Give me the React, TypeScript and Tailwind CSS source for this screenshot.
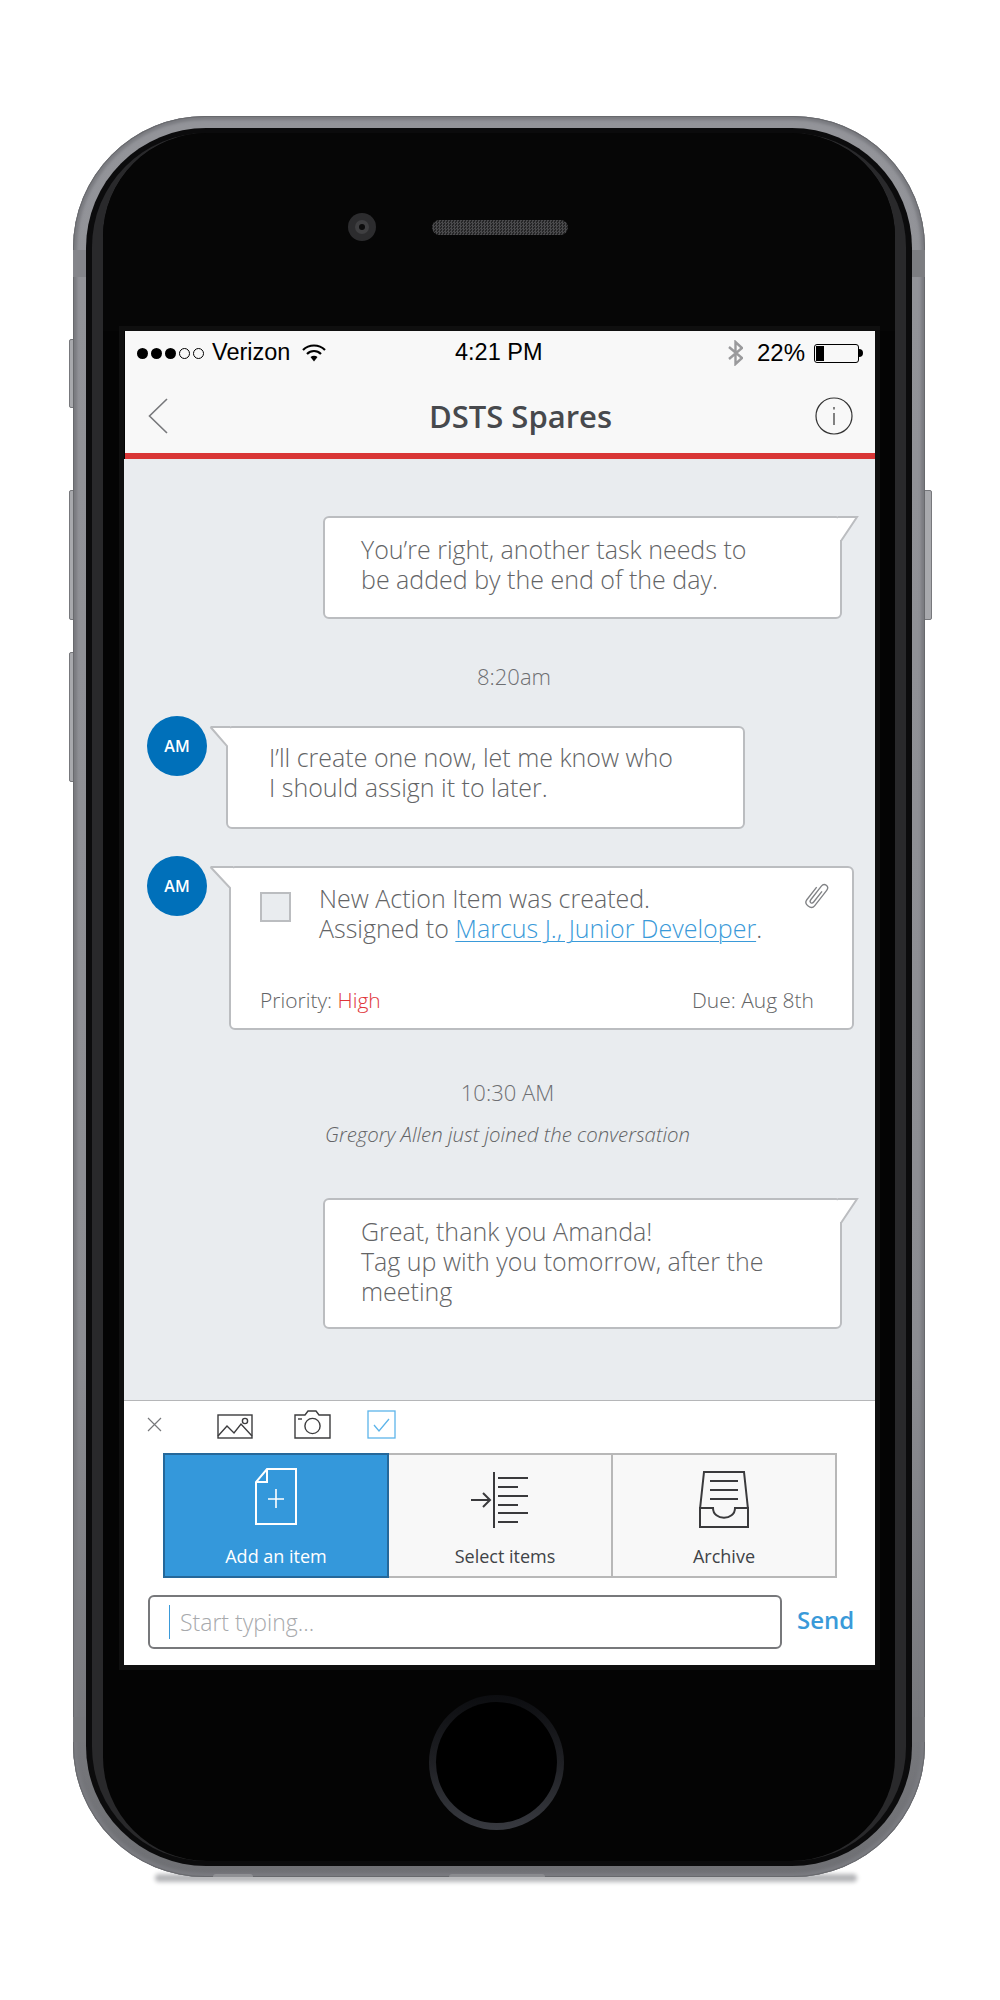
import React from 'react';

const body = "font-['Open_Sans',sans-serif]";

function LeftTail({ wide }: { wide?: boolean }) {
  if (wide) {
    return (
      <svg className="absolute left-[-22px] top-[-2px]" width="24" height="26" viewBox="0 0 24 26">
        <path d="M1.5 1 H24 V24 H21 Z" fill="#fff" />
        <path d="M1.5 1 H24 M1.5 1 L21 22 V26" fill="none" stroke="#bbbdc0" strokeWidth="2" />
      </svg>
    );
  }
  return (
    <svg className="absolute left-[-19px] top-[-2px]" width="21" height="24" viewBox="0 0 21 24">
      <path d="M1.5 1 H21 V22 H18 Z" fill="#fff" />
      <path d="M1.5 1 H21 M1.5 1 L18 20 V24" fill="none" stroke="#bbbdc0" strokeWidth="2" />
    </svg>
  );
}

function RightTail() {
  return (
    <svg className="absolute right-[-19px] top-[-2px]" width="21" height="28" viewBox="0 0 21 28">
      <path d="M0 1 H19 L3 24 H0 Z" fill="#fff" />
      <path d="M0 1 H19 L3 25 V28" fill="none" stroke="#bbbdc0" strokeWidth="2" />
    </svg>
  );
}

function Avatar() {
  return (
    <div className="flex h-[60px] w-[60px] shrink-0 items-center justify-center rounded-full bg-[#0070ba] text-[16px] font-semibold text-white">
      AM
    </div>
  );
}

function ClipIcon() {
  return (
    <svg className="absolute right-[21px] top-[12px]" width="30" height="32" viewBox="1 1 24 26" fill="none" stroke="#808285" strokeWidth="1.1">
      <g transform="rotate(38 13 14)">
        <path d="M9 8 V21 C9 25.5 17 25.5 17 21 V5 C17 1 11.5 1 11.5 5 V19 C11.5 21.5 14.5 21.5 14.5 19 V8" />
      </g>
    </svg>
  );
}

function ImageIcon() {
  return (
    <svg width="36" height="25" viewBox="0 0 36 25" fill="none" stroke="#3c3c3e" strokeWidth="1.4">
      <rect x="1" y="1" width="34" height="23" />
      <path d="M1 22 L10 12 L17 19 L24 10 L35 22" />
      <circle cx="28" cy="7" r="2.6" />
    </svg>
  );
}

function CameraIcon() {
  return (
    <svg width="37" height="29" viewBox="0 0 37 29" fill="none" stroke="#3c3c3e" strokeWidth="1.4">
      <path d="M1 5 H11 L14 1 H22 L25 5 H36 V28 H1 Z" />
      <circle cx="18.5" cy="16" r="7.6" />
      <path d="M4 9 H8" />
    </svg>
  );
}

function CheckIcon() {
  return (
    <svg width="29" height="29" viewBox="0 0 29 29" fill="none" stroke="#5cb4ea" strokeWidth="1.3">
      <rect x="1" y="1" width="27" height="27" />
      <path d="M7 15 L12 21 L22 9" />
    </svg>
  );
}

function AddIcon() {
  return (
    <svg width="60" height="66" viewBox="0 0 60 66" fill="none" stroke="#fff" strokeWidth="2">
      <path d="M21 4 H50 V59 H10 V17 Z M21 4 V17 H10" />
      <path d="M30 24 V43 M22 34 H38" strokeWidth="1.6" />
    </svg>
  );
}

function SelectIcon() {
  return (
    <svg width="60" height="66" viewBox="0 0 60 66" fill="none" stroke="#3a3a3c" strokeWidth="2">
      <path d="M1 35 H19 M13 28 L20 35 L13 42" />
      <path d="M24 7 V63" />
      <path d="M28 13 H58 M28 22 H48 M28 31 H58 M28 40 H48 M28 48 H58 M28 57 H48" />
    </svg>
  );
}

function ArchiveIcon() {
  return (
    <svg width="60" height="66" viewBox="0 0 60 66" fill="none" stroke="#3a3a3c" strokeWidth="2">
      <path d="M6 44 L10 7 H50 L54 44" />
      <path d="M16 16 H44 M16 25 H44 M16 34 H44" />
      <path d="M6 43 H19 C19 56 41 56 41 43 H54 V62 H6 Z" />
    </svg>
  );
}

export default function App() {
  return (
    <div className={`h-[2000px] w-[1000px] bg-white pl-[73px] pt-[116px] ${body}`}>
      <div className="relative h-[1761px] w-[852px]">
        {/* side buttons */}
        <div className="absolute left-[-4px] top-[223px] h-[69px] w-[6px] rounded-l-[2px] border border-[#77787c] bg-[#a8a9ad]" />
        <div className="absolute left-[-4px] top-[374px] h-[130px] w-[6px] rounded-l-[2px] border border-[#77787c] bg-[#a8a9ad]" />
        <div className="absolute left-[-4px] top-[536px] h-[130px] w-[6px] rounded-l-[2px] border border-[#77787c] bg-[#a8a9ad]" />
        <div className="absolute right-[-7px] top-[374px] h-[130px] w-[9px] rounded-r-[2px] border border-[#77787c] bg-[#a8a9ad]" />
        {/* shadow under the phone */}
        <div className="absolute bottom-[-5px] left-[82px] h-[8px] w-[702px] rounded-full bg-[#b4b5b8] blur-[2px]" />

        <div className="relative h-full w-full rounded-[132px] bg-[linear-gradient(180deg,#939499,#8c8d92_70%,#6f7074)] px-[13px] pb-[11px] pt-[12px] shadow-[inset_0_0_0_1px_#68696d,inset_0_0_3px_4px_#7a7b80]">
          {/* antenna bands */}
          <div className="absolute left-0 top-[134px] h-[27px] w-[13px] bg-[#84858a]" />
          <div className="absolute right-0 top-[134px] h-[27px] w-[13px] bg-[#7c7d81]" />
          <div className="absolute bottom-[135px] left-0 h-[25px] w-[13px] bg-[#77787c]" />
          <div className="absolute bottom-[135px] right-0 h-[25px] w-[13px] bg-[#77787c]" />
          {/* bottom seams */}
          <div className="absolute bottom-0 left-[140px] h-[3px] w-[40px] rounded-t-full bg-[#8f9094]" />
          <div className="absolute bottom-0 left-[376px] h-[3px] w-[96px] rounded-t-[6px] bg-[#8a8b8f]" />

          <div className="h-full w-full rounded-[120px] bg-[#0b0b0c] px-[6px] py-[5px]">
            <div className="h-full w-full rounded-[114px] bg-[#29292b] px-[11px]">
              <div className="flex h-full w-full flex-col rounded-[104px] bg-[#040404]">
                {/* top bezel */}
                <div className="flex h-[198px] shrink-0 items-start rounded-t-[104px] bg-[#060606] pl-[245px] pt-[80px]">
                  <div className="flex h-[28px] w-[28px] items-center justify-center rounded-full bg-[#2c2c2e]">
                    <div className="h-[14px] w-[14px] rounded-full bg-[#3f3f41]">
                      <div className="ml-[4px] mt-[4px] h-[6px] w-[6px] rounded-full bg-[#0c0c0c]" />
                    </div>
                  </div>
                  <div className="ml-[56px] mt-[7px] h-[15px] w-[136px] rounded-full bg-[repeating-conic-gradient(#4a4a4c_0_25%,#252526_0_50%)] bg-size-[3px_3px]" />
                </div>

                {/* screen */}
                <div className="ml-[21px] h-[1334px] w-[751px] shrink-0 shadow-[0_0_0_5px_#0f0f0f]">
                  <div className="ml-[1px] h-[122px] bg-[#f8f8f8]">
                    <div className="flex h-[44px] items-center pl-[12px] pr-[12px] text-[23.5px] text-black font-['Liberation_Sans',sans-serif]">
                      <div className="flex w-[318px] items-center">
                        <div className="flex gap-[3px]">
                          <span className="h-[11px] w-[11px] rounded-full bg-black" />
                          <span className="h-[11px] w-[11px] rounded-full bg-black" />
                          <span className="h-[11px] w-[11px] rounded-full bg-black" />
                          <span className="h-[11px] w-[11px] rounded-full border border-black" />
                          <span className="h-[11px] w-[11px] rounded-full border border-black" />
                        </div>
                        <span className="ml-[8px]">Verizon</span>
                        <svg className="ml-[12px]" width="24" height="18" viewBox="0 0 24 18" fill="none" stroke="#000" strokeWidth="2.2">
                          <path d="M1 6 C7 0 17 0 23 6 M5 10 C9 6 15 6 19 10" />
                          <path d="M8.5 13 C10.5 11.4 13.5 11.4 15.5 13 L12 17.4 Z" fill="#000" stroke="none" />
                        </svg>
                      </div>
                      <span className="text-[23.5px]">4:21 PM</span>
                      <div className="ml-auto flex items-center">
                        <svg width="15" height="26" viewBox="0 0 15 26" fill="none" stroke="#9a9a9c" strokeWidth="2.4">
                          <path d="M1 7 L14 18 L7.5 24 V2 L14 8 L1 19" />
                        </svg>
                        <span className="ml-[14px] text-[24px]">22%</span>
                        <div className="ml-[9px] flex h-[19px] w-[45px] rounded-[3px] border border-black p-[1px]">
                          <div className="h-full w-[8px] bg-black" />
                        </div>
                        <div className="h-[8px] w-[4px] rounded-r-full bg-black" />
                      </div>
                    </div>
                    <div className="flex h-[78px] items-center justify-between pl-[23px] pr-[22px] pt-[4px]">
                      <svg width="20" height="36" viewBox="0 0 20 36" fill="none" stroke="#77787b" strokeWidth="1.6">
                        <path d="M19 1 L1.5 18 L19 35" />
                      </svg>
                      <span className="ml-[58px] text-[31px] font-semibold text-[#47494d]">DSTS Spares</span>
                      <svg width="38" height="38" viewBox="0 0 38 38" fill="none" stroke="#333" strokeWidth="1.2">
                        <circle cx="19" cy="19" r="18" />
                        <path d="M19 16 V28 M19 10 V12.5" />
                      </svg>
                    </div>
                  </div>
                  <div className="ml-[1px] h-[6px] bg-[#d93636]" />

                  {/* chat */}
                  <div className="h-[941px] bg-[#e9ecef] pt-[57px] font-light text-[#636466]">
                    <div className="relative ml-[199px] h-[103px] w-[519px] rounded-[6px] border-2 border-[#bbbdc0] bg-white pl-[36px] pt-[16px] text-[25px] leading-[30px]">
                      <RightTail />
                      You’re right, another task needs to
                      <br />
                      be added by the end of the day.
                    </div>

                    <div className="mt-[45px] pl-[29px] text-center text-[22px] leading-[24px] text-[#6e6f72]">8:20am</div>

                    <div className="ml-[23px] mt-[28px] flex items-start gap-[19px]">
                      <Avatar />
                      <div className="relative mt-[10px] h-[103px] w-[519px] rounded-[6px] border-2 border-[#bbbdc0] bg-white pl-[41px] pt-[14px] text-[25px] leading-[30px]">
                        <LeftTail />
                        I’ll create one now, let me know who
                        <br />I should assign it to later.
                      </div>
                    </div>

                    <div className="ml-[23px] mt-[27px] flex items-start gap-[22px]">
                      <Avatar />
                      <div className="relative mt-[10px] flex h-[164px] w-[625px] flex-col rounded-[6px] border-2 border-[#bbbdc0] bg-white">
                        <LeftTail wide />
                        <ClipIcon />
                        <div className="flex pl-[29px] pt-[15px] text-[25px] leading-[30px]">
                          <div className="mt-[9px] h-[30px] w-[31px] shrink-0 border-2 border-[#bbbdc0] bg-[#e9ecef]" />
                          <div className="ml-[28px]">
                            New Action Item was created.
                            <br />
                            Assigned to <span className="text-[#3a9ad9] underline decoration-1 underline-offset-[3px]">Marcus J., Junior Developer</span>.
                          </div>
                        </div>
                        <div className="mt-[45px] flex justify-between pl-[29px] pr-[38px] text-[21px] leading-[24px]">
                          <span>
                            Priority: <span className="text-[#e0353a]">High</span>
                          </span>
                          <span>Due: Aug 8th</span>
                        </div>
                      </div>
                    </div>

                    <div className="mt-[50px] pl-[16px] text-center text-[22px] leading-[24px] text-[#6e6f72]">10:30 AM</div>
                    <div className="ml-[201px] mt-[18px] text-[20.4px] italic leading-[24px]">Gregory Allen just joined the conversation</div>

                    <div className="relative ml-[199px] mt-[52px] h-[131px] w-[519px] rounded-[6px] border-2 border-[#bbbdc0] bg-white pl-[36px] pt-[16px] text-[25px] leading-[30px]">
                      <RightTail />
                      Great, thank you Amanda!
                      <br />
                      Tag up with you tomorrow, after the
                      <br />
                      meeting
                    </div>
                  </div>

                  {/* composer */}
                  <div className="h-[265px] border-t border-[#b5b6b8] bg-white pt-[9px]">
                    <div className="flex h-[29px] items-center">
                      <svg className="ml-[23px]" width="15" height="15" viewBox="0 0 15 15" fill="none" stroke="#77787b" strokeWidth="1.2">
                        <path d="M1 1 L14 14 M14 1 L1 14" />
                      </svg>
                      <div className="ml-[55px] mt-[3px]">
                        <ImageIcon />
                      </div>
                      <div className="ml-[41px]">
                        <CameraIcon />
                      </div>
                      <div className="ml-[36px]">
                        <CheckIcon />
                      </div>
                    </div>
                    <div className="ml-[39px] mt-[14px] grid h-[125px] w-[674px] grid-cols-[226px_224px_224px] text-[18px] leading-[24px]">
                      <div className="flex flex-col items-center border-2 border-[#25689a] bg-[#3498db] pt-[10px] text-white">
                        <AddIcon />
                        <span className="mt-[13px]">Add an item</span>
                      </div>
                      <div className="flex flex-col items-center border-2 border-l-0 border-[#b8b8b8] bg-[#f8f8f8] pt-[10px] text-[#404347]">
                        <SelectIcon />
                        <span className="mt-[13px] pl-[10px]">Select items</span>
                      </div>
                      <div className="flex flex-col items-center border-2 border-l-0 border-[#b8b8b8] bg-[#f8f8f8] pt-[10px] text-[#404347]">
                        <ArchiveIcon />
                        <span className="mt-[13px]">Archive</span>
                      </div>
                    </div>
                    <div className="mt-[17px] flex items-center pl-[24px]">
                      <div className="flex h-[54px] w-[634px] items-center rounded-[6px] border-2 border-[#77787b] bg-white pl-[19px]">
                        <div className="h-[34px] w-px bg-[#3a9ad9]" />
                        <span className="ml-[10px] text-[23px] font-light text-[#a7a9ac]">Start typing...</span>
                      </div>
                      <span className="ml-[15px] mt-[-5px] text-[24px] font-semibold text-[#3a9ad9]">Send</span>
                    </div>
                  </div>
                </div>

                {/* home button */}
                <div className="flex grow justify-center pr-[5px] pt-[30px]">
                  <div className="h-[135px] w-[135px] rounded-full bg-[linear-gradient(180deg,#0c0d10,#1f2024_50%,#383a40)] p-[7px]">
                    <div className="h-full w-full rounded-full bg-black" />
                  </div>
                </div>
              </div>
            </div>
          </div>
        </div>
      </div>
    </div>
  );
}
